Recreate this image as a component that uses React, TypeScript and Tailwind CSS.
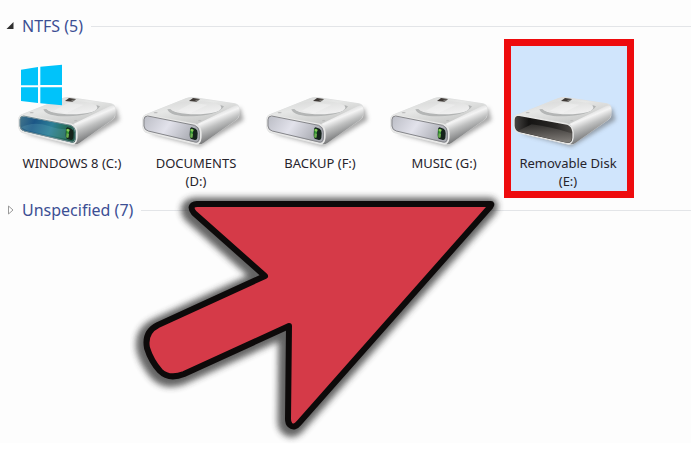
import { useId } from "react";

type DriveKind = "system" | "fixed" | "removable";

function DriveIcon({ kind }: { kind: DriveKind }) {
  const id = useId().replace(/[^a-zA-Z0-9]/g, "");
  const url = (name: string) => `url(#${name}${id})`;
  return (
    <svg viewBox="15 -60 372 270" className="block w-[124px] h-[90px]" aria-hidden="true">
      <defs>
        <linearGradient id={`top${id}`} x1="0" y1="0" x2="0.7" y2="1">
          <stop offset="0" stopColor="#d2d3d2" />
          <stop offset="0.45" stopColor="#e6e7e6" />
          <stop offset="1" stopColor="#c4c5c4" />
        </linearGradient>
        <linearGradient id={`side${id}`} x1="0" y1="0" x2="0.45" y2="1">
          <stop offset="0.2" stopColor="#c5c6c6" />
          <stop offset="0.42" stopColor="#f4f4f4" />
          <stop offset="0.58" stopColor="#bfc0c0" />
          <stop offset="0.85" stopColor="#7b7c7d" />
        </linearGradient>
        <linearGradient id={`face${id}`} x1="0" y1="0" x2="1" y2="0.35">
          <stop offset="0" stopColor="#b9bbc3" />
          <stop offset="0.5" stopColor="#e2e2eb" />
          <stop offset="1" stopColor="#a9abb2" />
        </linearGradient>
        <linearGradient id={`glow${id}`} x1="0" y1="0" x2="1" y2="0.2">
          <stop offset="0" stopColor="#47788b" />
          <stop offset="0.3" stopColor="#1b5686" />
          <stop offset="0.62" stopColor="#2c7f97" />
          <stop offset="0.85" stopColor="#256f5e" />
          <stop offset="1" stopColor="#225a4a" />
        </linearGradient>
        <linearGradient id={`hole${id}`} x1="0" y1="0" x2="1" y2="0">
          <stop offset="0" stopColor="#4a4846" />
          <stop offset="0.25" stopColor="#151413" />
          <stop offset="0.7" stopColor="#292725" />
          <stop offset="1" stopColor="#4d4a47" />
        </linearGradient>
        <linearGradient id={`floor${id}`} x1="0" y1="0" x2="0.15" y2="1">
          <stop offset="0" stopColor="#2c2a28" />
          <stop offset="1" stopColor="#7c7874" />
        </linearGradient>
        <linearGradient id={`dish${id}`} x1="0" y1="0" x2="0.4" y2="1">
          <stop offset="0" stopColor="#d9dad9" />
          <stop offset="1" stopColor="#efefef" />
        </linearGradient>
        <filter id={`blur${id}`} x="-20%" y="-20%" width="140%" height="150%">
          <feGaussianBlur stdDeviation="6" />
        </filter>
        <filter id={`soft${id}`} x="-10%" y="-30%" width="120%" height="160%">
          <feGaussianBlur stdDeviation="2" />
        </filter>
      </defs>
      <path d="M60 160 L212 200 L344 120 L334 84 L200 130 Z" fill="#555" opacity="0.5" filter={url("blur")} />
      <path d="M50 103 L172 54 Q184 50 198 52 L318 70 Q332 73 332 88 L331 108 Q330 114 322 120 L222 190 Q214 196 202 194 L54 160 Q42 156 41 142 L40 118 Q41 107 50 103 Z" fill="#dedfdf" />
      <path d="M50 104 L172 55 Q184 51 198 53 L318 71 Q326 73 316 78 L214 130 Q206 134 196 132 L50 106 Z" fill={url("top")} />
      <path d="M206 131 L314 79 Q331 72 331 90 L330 106 Q329 114 321 120 L224 188 Q215 194 207 192 Q217 182 217 164 Q217 140 206 131 Z" fill={url("side")} />
      <g filter={url("soft")}>
        <path d="M115 88 C120 104 152 110 188 109 C232 108 274 99 285 79 L276 76 C255 98 160 108 124 87 Z" fill="#a9abab" opacity="0.8" />
        <ellipse cx="200" cy="83" rx="77" ry="20" fill={url("dish")} />
        <path d="M190 68 L236 74 L184 100 L146 92 Z" fill="#fff" opacity="0.25" />
      </g>
      <path d="M180 63 L192 54 L213 57 L202 65 Z" fill="#3f3a36" />
      <path d="M198 60 L213 58 L203 65 Z" fill="#787673" />
      <ellipse cx="80" cy="98" rx="6" ry="2" fill="#bbb" />
      <ellipse cx="212" cy="122" rx="5" ry="2" fill="#bbb" />
      {kind === "removable" ? (
        <>
          <path d="M51 105 Q39 107 39 120 L39 138 Q40 154 55 158 L199 191 Q214 193 216 174 L216 156 Q214 138 198 132 Z" fill={url("hole")} stroke="#e8e8e7" strokeWidth="4" />
          <path d="M50 153 L92 133 Q150 140 212 160 L212 176 Q209 190 199 188 L57 156 Z" fill={url("floor")} />
        </>
      ) : (
        <>
          <path d="M54 106 Q43 106 42 118 L42 139 Q43 153 57 156 L199 190 Q214 193 215 174 L215 156 Q214 138 198 133 Z" fill={kind === "system" ? url("glow") : url("face")} stroke="#e8e8e7" strokeWidth="5" />
          <path d="M56 108 Q45 108 45 119 L45 138 Q46 150 58 153 L198 186 Q210 188 211 174 L211 157 Q210 141 197 136 Z" fill="none" stroke={kind === "system" ? "#738d94" : "#85868a"} strokeWidth="3" />
          {kind === "system" && <path d="M48 142 Q85 122 132 138 T204 144 L198 180 L68 152 Z" fill="#6baec0" opacity="0.25" />}
          <path d="M188 142 L200 146 Q206 149 206 160 L205 174 Q203 182 195 179 L185 176 Q182 174 182 164 L183 148 Q184 142 188 142 Z" fill="#15231b" />
          <path d="M184 149 Q185 144 193 147 L190 171 L184 173 Z" fill="#359c36" />
          <path d="M185 148 Q188 146 194 150 L192 155 L185 153 Z" fill="#8fca5c" />
          <path d="M185 160 L192 162 L190 174 L184 172 Z" fill="#6fae50" />
        </>
      )}
      {kind === "system" && (
        <g fill="#00c3fa">
          <path d="M48 -31 L99 -39 V16 H48 Z" />
          <path d="M106 -40 L171 -46 V15 H106 Z" />
          <path d="M48 22 H99 V69 L48 63 Z" />
          <path d="M106 22 H171 V76 L106 70 Z" />
        </g>
      )}
    </svg>
  );
}

const drives: { name: string; kind: DriveKind }[] = [
  { name: "WINDOWS 8 (C:)", kind: "system" },
  { name: "DOCUMENTS (D:)", kind: "fixed" },
  { name: "BACKUP (F:)", kind: "fixed" },
  { name: "MUSIC (G:)", kind: "fixed" },
  { name: "Removable Disk (E:)", kind: "removable" },
];

function GroupHeader({ title, open }: { title: string; open: boolean }) {
  return (
    <h2 className="flex h-6 items-center">
      <button type="button" aria-expanded={open} className="flex items-center gap-2 text-[16px] leading-6 text-[#3c4f94]">
        <svg viewBox="0 0 8 10" className="h-[10px] w-2" aria-hidden="true">
          {open ? <path d="M7.5 1 V8 H0.5 Z" fill="#303030" /> : <path d="M2.5 1 L7 5 L2.5 9 Z" fill="#fff" stroke="#9a9a9a" />}
        </svg>
        {title}
      </button>
      <span className="ml-2 h-px flex-1 bg-[#e3e5e8]" />
    </h2>
  );
}

function PointerArrow() {
  return (
    <svg viewBox="130 190 380 254" className="pointer-events-none absolute left-[130px] top-[190px] z-20 h-[254px] w-[380px]" aria-hidden="true">
      <defs>
        <filter id="arrowShadow" x="-10%" y="-10%" width="120%" height="125%">
          <feGaussianBlur stdDeviation="3" />
        </filter>
        <path id="arrowShape" d="M197 204 L491 204 Q492 204 490 207 L299 423 Q294 429 290 425 Q288 423 288 419 L289 326 L184 374 Q169 380 160 371 Q151 361 147 348 Q144 332 158 325 L265 276 L194 213 Q188 205 197 204 Z" />
      </defs>
      <use href="#arrowShape" fill="#333" stroke="#333" strokeWidth="17" strokeLinejoin="round" transform="translate(-2 2)" opacity="0.75" filter="url(#arrowShadow)" />
      <use href="#arrowShape" fill="#d53a48" stroke="#0d0a0a" strokeWidth="6" strokeLinejoin="round" />
    </svg>
  );
}

export default function App() {
  return (
    <div className="min-h-screen bg-white font-['Noto_Sans','Open_Sans',sans-serif]">
      <main className="relative bg-[#fdfdfd] pb-[221px] pl-1.5 pt-3.5">
        <GroupHeader title="NTFS (5)" open />
        <ul className="flex h-40 pl-1 pt-2">
          {drives.map(({ name, kind }) => {
            const selected = kind === "removable";
            return (
              <li key={name} className="relative w-[124px] shrink-0">
                {selected && <div className="absolute -left-0.5 -right-1 -top-[7px] h-[159px] border-[7px] border-[#ee0b0e] bg-[#d0e5fc]" />}
                <button type="button" aria-pressed={selected} className="relative block w-full pt-3.5 text-[13px] leading-[18px] text-[#27242c]">
                  <DriveIcon kind={kind} />
                  <span className="block px-3 pt-1">{name}</span>
                </button>
              </li>
            );
          })}
        </ul>
        <GroupHeader title="Unspecified (7)" open={false} />
        <PointerArrow />
      </main>
    </div>
  );
}
